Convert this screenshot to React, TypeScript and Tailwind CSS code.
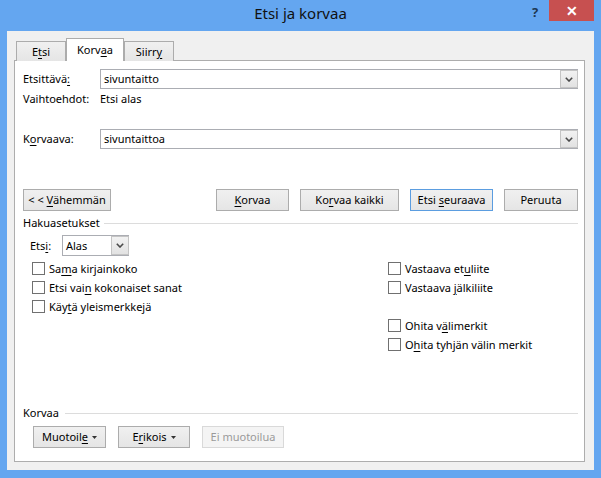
import React from 'react';

// Windows 8 style "Etsi ja korvaa" (Find and Replace) dialog

type KeyLabelProps = { pre?: string; k?: string; post?: string };

const KeyLabel: React.FC<KeyLabelProps> = ({ pre = '', k = '', post = '' }) => (
  <span className="whitespace-pre">
    {pre}
    {k && <span className="underline underline-offset-[2px]">{k}</span>}
    {post}
  </span>
);

const Chevron: React.FC = () => (
  <svg width="8" height="5" viewBox="0 0 8 5">
    <path d="M0.8 0.8 L4 4 L7.2 0.8" fill="none" stroke="#4a4a4a" strokeWidth="1.6" />
  </svg>
);

const Caret: React.FC = () => (
  <svg width="5" height="3" viewBox="0 0 5 3" className="ml-[4px]">
    <path d="M0 0 H5 L2.5 3 Z" fill="#333" />
  </svg>
);

const Combo: React.FC<{ value: string; className?: string }> = ({ value, className = '' }) => (
  <div className={`flex items-stretch border border-[#abadb3] bg-white ${className}`}>
    <span className="flex flex-1 items-center pl-[3px]">{value}</span>
    <span className="-mr-px flex w-[18px] items-center justify-center border border-[#c4c4c4] bg-[linear-gradient(#f2f2f2,#e2e2e2)]">
      <Chevron />
    </span>
  </div>
);

type BtnProps = {
  children: React.ReactNode;
  width: string;
  variant?: 'normal' | 'default' | 'disabled';
};

const DlgButton: React.FC<BtnProps> = ({ children, width, variant = 'normal' }) => {
  const look =
    variant === 'default'
      ? 'border-[#5b9de0] bg-[linear-gradient(#f0f0f0,#e5e5e5)] text-black'
      : variant === 'disabled'
        ? 'border-[#d9d9d9] bg-[#f4f4f4] text-[#9a9a9a]'
        : 'border-[#acacac] bg-[linear-gradient(#f0f0f0,#e5e5e5)] text-black';
  return (
    <div className={`flex h-[22px] items-center justify-center border ${look} ${width}`}>{children}</div>
  );
};

const CheckRow: React.FC<{ label: React.ReactNode }> = ({ label }) => (
  <div className="flex h-[19px] items-center gap-[4px]">
    <span className="h-[13px] w-[13px] border border-[#707070] bg-white" />
    {label}
  </div>
);

const App: React.FC = () => {
  return (
    <div className="flex h-[478px] w-[601px] flex-col bg-[#64a6f0] font-['Noto_Sans',sans-serif] text-[11px] leading-[16px] text-black">
      {/* title bar */}
      <div className="grid h-[31px] grid-cols-[1fr_auto_1fr]">
        <div />
        <div className="pt-[4px] text-[15px] leading-[18px] text-[#111]">Etsi ja korvaa</div>
        <div className="flex items-start justify-end">
          <div className="mr-[4px] mt-[4px] w-[20px] text-center text-[13px] font-bold leading-[16px] text-[#1d3753]">?</div>
          <div className="mr-[7px] flex h-[21px] w-[45px] items-center justify-center bg-[#c75050] text-[14px] font-bold leading-none text-white">
            ✕
          </div>
        </div>
      </div>

      {/* client area */}
      <div className="mx-[7px] flex h-[439px] flex-col bg-[#f0f0f0] pl-[7px] pr-[9px] pt-[7px]">
        {/* tabs */}
        <div className="relative z-10 -mb-px ml-[2px] flex h-[23px] items-end">
          <div className="flex h-[20px] w-[50px] items-center justify-center border border-b-0 border-[#acacac] bg-[linear-gradient(#f0f0f0,#e5e5e5)]">
            <KeyLabel pre="E" k="t" post="si" />
          </div>
          <div className="flex h-[23px] w-[58px] items-center justify-center border border-b-0 border-[#acacac] bg-white pb-[1px]">
            <KeyLabel pre="Korv" k="a" post="a" />
          </div>
          <div className="flex h-[20px] w-[50px] items-center justify-center border border-b-0 border-[#acacac] bg-[linear-gradient(#f0f0f0,#e5e5e5)]">
            <KeyLabel pre="Siirr" k="y" />
          </div>
        </div>

        {/* panel */}
        <div className="flex h-[402px] flex-col border border-[#adadad] bg-white pl-[8px] pr-[6px] pt-[8px]">
          <div className="flex h-[20px] items-center">
            <div className="w-[77px]">
              <KeyLabel pre="Etsittävä" k=":" />
            </div>
            <Combo value="sivuntaitto" className="h-[20px] flex-1" />
          </div>
          <div className="mt-[2px] flex h-[16px] items-center">
            <div className="w-[77px]">Vaihtoehdot:</div>
            <div>Etsi alas</div>
          </div>
          <div className="mt-[22px] flex h-[20px] items-center">
            <div className="w-[77px]">
              <KeyLabel pre="K" k="o" post="rvaava:" />
            </div>
            <Combo value="sivuntaittoa" className="h-[20px] flex-1" />
          </div>

          {/* command buttons */}
          <div className="mt-[40px] flex items-center">
            <DlgButton width="w-[88px]">
              <KeyLabel pre="< < " k="V" post="ähemmän" />
            </DlgButton>
            <div className="ml-auto flex gap-[11px]">
              <DlgButton width="w-[73px]">
                <KeyLabel k="K" post="orvaa" />
              </DlgButton>
              <DlgButton width="w-[99px]">
                <KeyLabel pre="Ko" k="r" post="vaa kaikki" />
              </DlgButton>
              <DlgButton width="w-[83px]" variant="default">
                <KeyLabel pre="Etsi " k="s" post="euraava" />
              </DlgButton>
              <DlgButton width="w-[74px]">Peruuta</DlgButton>
            </div>
          </div>

          {/* search options */}
          <div className="mt-[4px] flex h-[16px] items-center">
            <span>Hakuasetukset</span>
            <span className="ml-[4px] h-px flex-1 bg-[#dcdcdc]" />
          </div>
          <div className="ml-[7px] mt-[4px] flex items-center">
            <div className="w-[32px]">
              <KeyLabel pre="Ets" k="i" post=":" />
            </div>
            <Combo value="Alas" className="h-[21px] w-[67px]" />
          </div>

          <div className="ml-[9px] mt-[3px] grid grid-cols-[356px_1fr]">
            <div className="flex flex-col">
              <CheckRow label={<KeyLabel pre="Sa" k="m" post="a kirjainkoko" />} />
              <CheckRow label={<KeyLabel pre="Etsi vai" k="n" post=" kokonaiset sanat" />} />
              <CheckRow label={<KeyLabel pre="Käy" k="t" post="ä yleismerkkejä" />} />
            </div>
            <div className="flex flex-col">
              <CheckRow label={<KeyLabel pre="Vastaava et" k="u" post="liite" />} />
              <CheckRow label={<KeyLabel pre="Vastaava " k="j" post="älkiliite" />} />
              <div className="h-[19px]" />
              <CheckRow label={<KeyLabel pre="Ohita v" k="ä" post="limerkit" />} />
              <CheckRow label={<KeyLabel pre="O" k="h" post="ita tyhjän välin merkit" />} />
            </div>
          </div>

          {/* replace formatting */}
          <div className="mt-[51px] flex h-[16px] items-center">
            <span>Korvaa</span>
            <span className="ml-[6px] h-px flex-1 bg-[#dcdcdc]" />
          </div>
          <div className="ml-[10px] mt-[5px] flex gap-[12px]">
            <DlgButton width="w-[73px]">
              <KeyLabel pre="Muotoil" k="e" />
              <Caret />
            </DlgButton>
            <DlgButton width="w-[72px]">
              <KeyLabel pre="E" k="r" post="ikois" />
              <Caret />
            </DlgButton>
            <DlgButton width="w-[82px]" variant="disabled">
              Ei muotoilua
            </DlgButton>
          </div>
        </div>
      </div>
    </div>
  );
};

export default App;
